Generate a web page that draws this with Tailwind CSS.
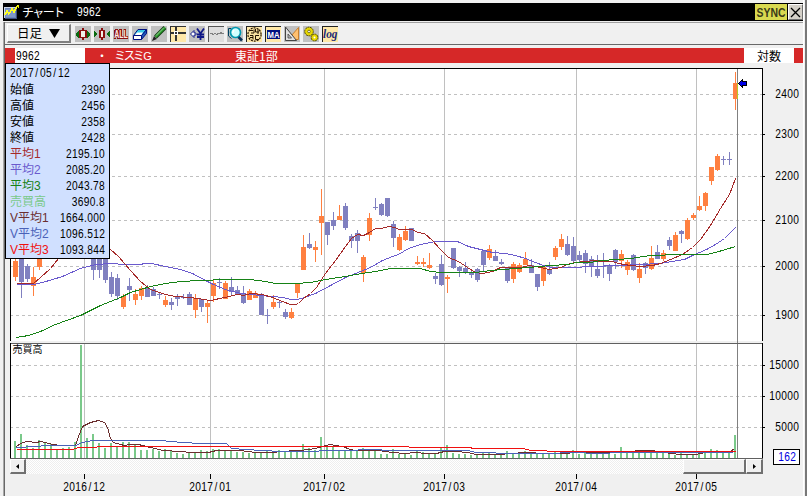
<!DOCTYPE html>
<html lang="ja">
<head>
<meta charset="utf-8">
<title>チャート 9962</title>
<script src="https://cdn.jsdelivr.net/npm/@tailwindcss/browser@4"></script>
</head>
<body class="overflow-hidden bg-[#f0f0f0]">
<div class="relative flex h-[496px] w-[807px] flex-col overflow-hidden bg-[#f0f0f0] font-['Liberation_Sans','Noto_Sans_CJK_JP',sans-serif] text-[12px] leading-none text-black">

  <!-- Title bar -->
  <header class="mt-[3px] ml-[3px] flex h-[18px] w-[801px] shrink-0 items-center bg-black text-white">
    <svg class="ml-px h-[16px] w-[16px]" viewBox="0 0 16 16" shape-rendering="crispEdges">
      <path d="M1 4h11v11H1z" fill="#7088b8"/><path d="M2 5h9v8H2z" fill="#8098c8"/><path d="M0 3h12v1H1v10H0z" fill="#d0d8e8"/><path d="M12 4h1v11H1v-1h11z" fill="#405080"/>
      <path d="M1 11l2-4 2 3 3-5 2 3 2-4 2-3" fill="none" stroke="#ffff20" stroke-width="1.4"/><path d="M12 2h3M14 1v3" stroke="#e8e800"/>
    </svg>
    <span class="ml-[2px] w-[55px] whitespace-nowrap font-['Noto_Sans_CJK_JP'] text-[12px] tracking-[-1.6px]">チャート</span>
    <span class="inline-block origin-left scale-x-85 tracking-[0.385px]">9962</span>
    <span class="ml-auto flex h-[16px] w-[32px] items-center justify-center bg-[#d9d950]">
      <svg class="h-[16px] w-[32px] overflow-visible" viewBox="0 0 32 16"><text x="1.5" y="12.8" textLength="29" lengthAdjust="spacingAndGlyphs" font-family="Liberation Sans" font-size="13.5" font-weight="bold" fill="#3a3a18">SYNC</text></svg>
    </span>
    <span class="mr-[1px] ml-px flex h-[16px] w-[15px] items-center justify-center border border-t-white border-r-[#707070] border-b-[#707070] border-l-white bg-[#d4d0c8]">
      <svg class="h-[11px] w-[11px]" viewBox="0 0 11 11"><path d="M1 1l9 9M10 1L1 10" stroke="#000" stroke-width="1.3"/></svg>
    </span>
  </header>

  <!-- Toolbar -->
  <div class="mt-px ml-[3px] flex h-[23px] w-[801px] shrink-0 items-center border-t border-b border-l border-t-[#a0a0a0] border-b-[#686868] border-l-[#a0a0a0]">
    <div class="ml-[3px] flex h-[19px] w-[64px] items-center border-t border-r-2 border-b-2 border-l border-t-white border-r-[#808080] border-b-[#808080] border-l-white pl-[9px]">
      <span class="whitespace-nowrap font-['Noto_Sans_CJK_JP'] text-[12.5px]">日足</span>
      <svg class="ml-[7px] h-[9px] w-[11px]" viewBox="0 0 11 9"><path d="M0 0h11L5.500 9z"/></svg>
    </div>
    <div class="ml-[4px] flex gap-[3px]">
      <svg class="h-4 w-4" viewBox="0 0 16 16" shape-rendering="crispEdges"><path fill="#c0c0c0" d="M0 0h16v16H0z"/><path fill="#0a6a10" d="M1 7h1V6h1V5h1v7H3v-1H2v-1H1zM15 7h-1V6h-1V5h-1v7h1v-1h1v-1h1z"/><path fill="#8b1010" d="M4 4h3V2h2v2h3v8H9v2H7v-2H4z"/><path fill="#f0f0e8" d="M6 5h4v6H6z"/></svg>
      <svg class="h-4 w-4" viewBox="0 0 16 16" shape-rendering="crispEdges"><path fill="#c0c0c0" d="M0 0h16v16H0z"/><path fill="#0a6a10" d="M0 5h1v1h1v1h1v2H2v1H1v1H0zM16 5h-1v1h-1v1h-1v2h1v1h1v1h1z"/><path fill="#8b1010" d="M5 4h2V2h2v2h2v8H9v2H7v-2H5z"/><path fill="#f0f0e8" d="M7 5h2v6H7z"/></svg>
      <svg class="h-4 w-4 overflow-visible" viewBox="0 0 16 16" shape-rendering="crispEdges"><path fill="#c0c0c0" d="M0 0h16v16H0z"/><path fill="#8b1010" d="M2 3h3v1h1v9H4v-2H3v2H1V4h1zM6 3h3v7h2v3H6zM11 3h2v7h2v3h-4z"/><text x="1.300" y="12" textLength="13.500" lengthAdjust="spacingAndGlyphs" font-family="Liberation Sans" font-weight="bold" font-size="11" fill="#ffe8e0" stroke="#8b1010" stroke-width="1.300" paint-order="stroke">ALL</text></svg>
      <svg class="h-4 w-4" viewBox="0 0 16 16"><path fill="#c0c0c0" d="M0 0h16v16H0z"/><path fill="#38c8e8" stroke="#001080" d="M6 3.500h8.500l-4.500 6H1.500z"/><path fill="#fff" d="M5 6.500h6L9.500 9H3z"/><path fill="#2058b8" stroke="#001080" d="M9.500 9.500l5-6v4l-5 6z"/><path fill="#fff" stroke="#001080" d="M1.500 9.500h8v4h-8z"/></svg>
      <svg class="h-4 w-4" viewBox="0 0 16 16"><path fill="#c0c0c0" d="M0 0h16v16H0z"/><path stroke="#104010" stroke-width="4" d="M14 1.500L4.500 11"/><path stroke="#30a030" stroke-width="2.200" d="M14 1.500L4.500 11"/><path d="M3 10l3 3-5 2z" fill="#222"/><path stroke="#b0e0b0" stroke-width=".8" d="M13 1.500L5 9.500"/></svg>
      <svg class="h-4 w-4" viewBox="0 0 16 16" shape-rendering="crispEdges"><path fill="#ffe8a8" d="M0 0h16v16H0z"/><path fill="#333" d="M0 0h16v1H0zM0 0h1v16H0zM1 6h15v2H1zM5 1h2v14H5z"/><path fill="#fff" d="M4 5h4v4H4z"/><path fill="#333" d="M5 6h2v2H5z"/></svg>
      <svg class="h-4 w-4" viewBox="0 0 16 16"><path fill="#c0c0c0" d="M0 0h16v16H0z"/><path fill="#fff" stroke="#101888" d="M1.500 8L5 4.500V7h2v2H5v2.500z"/><path fill="none" stroke="#101888" stroke-width="1.800" d="M8 2.500l3.500 5 3.500-5M11.500 7v7M8 8.500h7M8 11h7"/></svg>
      <svg class="h-4 w-4" viewBox="0 0 16 16" shape-rendering="crispEdges"><path fill="#dedede" d="M0 0h16v16H0z"/><path fill="#555" d="M0 0h16v1H0zM0 0h1v16H0z"/><path fill="none" stroke="#808080" d="M2 8l2-1 1 2 2-2 2 2 1-2 2 1 1-2 1 2 2-1"/></svg>
      <svg class="h-4 w-4" viewBox="0 0 16 16"><path fill="#c0c0c0" d="M0 0h16v16H0z"/><path fill="none" stroke="#004060" d="M4 2.500H1.500V10l3 2.500"/><circle cx="8.500" cy="6.500" r="5" fill="#d0ffff" stroke="#0098b0" stroke-width="1.700"/><path d="M7 4l-1.500 3" stroke="#fff" stroke-width="1.500"/><path stroke="#083058" stroke-width="2.600" d="M11.500 11l3.500 3.500"/></svg>
      <svg class="h-4 w-4" viewBox="0 0 16 16"><path fill="#ffe8a8" d="M0 0h16v16H0z"/><path fill="#222" d="M0 0h16v1H0zM0 0h1v16H0z"/><circle cx="8.500" cy="8.500" r="6.600" fill="#f8e0a0" stroke="#201000" stroke-width="1.200" stroke-dasharray="2 1"/><path d="M4 4.500h3M5 7h3V3.500M9.500 3v3H13M12 3v5M4 9.500h3v4M4 11.500h3M13 9.500h-3.500v4H13" fill="none" stroke="#201000"/></svg>
      <svg class="h-4 w-4 overflow-visible" viewBox="0 0 16 16"><path fill="#ffe8a8" d="M0 0h16v16H0z"/><path fill="#222" d="M0 0h16v1H0zM0 0h1v16H0z"/><path fill="#001080" d="M2 4h13v9H2z"/><text x="2.600" y="11.800" textLength="12" lengthAdjust="spacingAndGlyphs" font-family="Liberation Sans" font-weight="bold" font-size="9" fill="#fff">MA</text></svg>
      <svg class="h-4 w-4" viewBox="0 0 16 16"><path fill="#c0c0c0" d="M0 0h16v16H0z"/><path fill="#ffc070" stroke="#c88030" d="M14.500 1.500v12H4z"/><path fill="#e0e0e0" stroke="#444" d="M1.500 1v13.500h11z"/><path d="M4 8v4h3.500z" fill="#c0c0c0" stroke="#444" stroke-width=".8"/></svg>
      <svg class="h-4 w-4" viewBox="0 0 16 16"><path fill="#c0c0c0" d="M0 0h16v16H0z"/><circle cx="6" cy="5.500" r="4.300" fill="#e8d800" stroke="#504800" stroke-dasharray="2 .6"/><circle cx="6" cy="5.500" r="1.300" fill="#fff" stroke="#504800" stroke-width=".7"/><circle cx="11.500" cy="11.500" r="3.400" fill="#e8d800" stroke="#504800" stroke-dasharray="2 .6"/><circle cx="11.500" cy="11.500" r="1" fill="#fff"/></svg>
      <svg class="h-4 w-4 overflow-visible" viewBox="0 0 16 16"><path fill="#ffe8a8" d="M0 0h16v16H0z"/><path fill="#222" d="M0 0h16v1H0zM0 0h1v16H0z"/><text x="1" y="11.500" textLength="14.500" lengthAdjust="spacingAndGlyphs" font-family="Liberation Serif" font-style="italic" font-weight="bold" font-size="12.500" fill="#202878">log</text></svg>
    </div>
  </div>

  <!-- Instrument bar -->
  <div class="mt-[3px] ml-[5px] flex h-[15px] w-[798px] shrink-0 items-center bg-[#d62828] font-['Noto_Sans_CJK_JP'] text-white">
    <span class="ml-[10px] flex h-full w-[70px] items-center bg-white pl-px font-['Liberation_Sans'] text-black"><span class="inline-block origin-left scale-x-85 tracking-[0.385px]">9962</span></span>
    <span class="ml-[11px] w-[18px]">・</span>
    <span class="w-[121px] whitespace-nowrap tracking-[-2.6px]">ミスミ<span class="ml-px font-['Liberation_Sans'] text-[11px] tracking-normal">G</span></span>
    <span class="whitespace-nowrap">東証1部</span>
    <span class="mr-[9px] ml-auto flex h-full w-[50px] items-center justify-center bg-white text-black">対数</span>
  </div>

  <!-- Price and volume panes -->
  <svg id="plot" class="block h-[396px] w-[807px] shrink-0" viewBox="0 63 807 396" shape-rendering="crispEdges"></svg>

  <!-- Scrollbar -->
  <div class="ml-[10px] flex h-[15px] w-[753px] shrink-0 bg-[#f7f7f7] bg-[repeating-conic-gradient(#eeeeee_0_25%,#ffffff_0_50%)] bg-[length:2px_2px]">
    <span class="flex w-[16px] items-center justify-center border-t border-r-2 border-b-2 border-l border-t-white border-r-[#707070] border-b-[#707070] border-l-white bg-[#f0f0f0]"><svg class="h-[5px] w-[3px]" viewBox="0 0 3 5"><path d="M3 0v5L0 2.500z"/></svg></span>
    <span class="ml-auto w-[63px] border-t border-r-2 border-b-2 border-l border-t-white border-r-[#707070] border-b-[#707070] border-l-white bg-[#f0f0f0]"></span>
    <span class="flex w-[17px] items-center justify-center border-t border-r-2 border-b-2 border-l border-t-white border-r-[#707070] border-b-[#707070] border-l-white bg-[#f0f0f0]"><svg class="h-[5px] w-[3px]" viewBox="0 0 3 5"><path d="M0 0v5l3-2.500z"/></svg></span>
  </div>

  <!-- Date axis -->
  <svg id="dates" class="block h-[22px] w-[807px] shrink-0" viewBox="0 474 807 22"></svg>

  <!-- Window frame edges -->
  <div class="absolute top-[22px] bottom-0 left-[3px] w-[2px] border-r border-l border-r-[#686868] border-l-[#a8a8a8]"></div>
  <div class="absolute top-0 right-0 bottom-0 w-[4px] border-r-2 border-l border-r-[#787878] border-l-white"></div>

  <!-- Bar count -->
  <div class="absolute top-[449px] left-[773px] flex h-[16px] w-[27px] items-center justify-end border border-black bg-white pr-[3px] text-[#0000e0]"><span class="inline-block origin-right scale-x-85 tracking-[0.385px]">162</span></div>

  <!-- Data window -->
  <div class="absolute top-[63px] left-[5px] flex h-[196px] w-[105px] flex-col border border-black bg-[#d0e0ff] pr-[4px] pl-[4px] font-['Liberation_Sans','Noto_Sans_CJK_JP',sans-serif]">
    <div class="flex h-[18px] origin-left scale-x-85 items-center tracking-[0.385px]">2017<i class="w-[7.06px] shrink-0 pl-[1.5px] not-italic">/</i>05<i class="w-[7.06px] shrink-0 pl-[1.5px] not-italic">/</i>12</div>
    <div class="flex h-4 items-center justify-between"><span>始値</span><span class="origin-right scale-x-85 tracking-[0.385px]">2390</span></div>
    <div class="flex h-4 items-center justify-between"><span>高値</span><span class="origin-right scale-x-85 tracking-[0.385px]">2456</span></div>
    <div class="flex h-4 items-center justify-between"><span>安値</span><span class="origin-right scale-x-85 tracking-[0.385px]">2358</span></div>
    <div class="flex h-4 items-center justify-between"><span>終値</span><span class="origin-right scale-x-85 tracking-[0.385px]">2428</span></div>
    <div class="flex h-4 items-center justify-between"><span class="shrink-0 text-[#a52a2a]">平均1</span><span class="origin-right scale-x-85 tracking-[0.385px]">2195.10</span></div>
    <div class="flex h-4 items-center justify-between"><span class="shrink-0 text-[#6a5acd]">平均2</span><span class="origin-right scale-x-85 tracking-[0.385px]">2085.20</span></div>
    <div class="flex h-4 items-center justify-between"><span class="shrink-0 text-[#168216]">平均3</span><span class="origin-right scale-x-85 tracking-[0.385px]">2043.78</span></div>
    <div class="flex h-4 items-center justify-between"><span class="shrink-0 text-[#7ac98a]">売買高</span><span class="origin-right scale-x-85 tracking-[0.385px]">3690.8</span></div>
    <div class="flex h-4 items-center justify-between"><span class="w-0 whitespace-nowrap text-[#6b2e2e]">V平均1</span><span class="origin-right scale-x-85 tracking-[0.385px]">1664.000</span></div>
    <div class="flex h-4 items-center justify-between"><span class="w-0 whitespace-nowrap text-[#4a62b8]">V平均2</span><span class="origin-right scale-x-85 tracking-[0.385px]">1096.512</span></div>
    <div class="flex h-4 items-center justify-between"><span class="w-0 whitespace-nowrap text-[#f01010]">V平均3</span><span class="origin-right scale-x-85 tracking-[0.385px]">1093.844</span></div>
  </div>
</div>

<script>
// Candles: x, high, body top, body bottom, low, colour (u = up, d = down)
const candles = `15 255 261 277 281 u|21 250 255 282 298 d|27 264 266 279 282 d|33 267 277 286 296 u|39 250 255 267 270 u
93 250 250 270 280 d|99 250 250 270 278 d|105 250 250 280 283 d|111 272 277 294 297 d|117 274 278 296 300 d|123 294 296 307 309 u|129 278 286 290 301 d|135 289 294 300 305 u|141 286 288 296 300 u|147 285 288 297 297 d|153 287 289 296 296 d|159 292 294 295 299 d|165 296 300 305 307 u|171 298 302 305 310 d|177 294 296 299 306 d|183 294 297 298 299 d|189 292 294 305 305 d|195 294 298 310 318 u|201 299 299 307 312 d|207 301 303 307 323 u
213 280 283 296 302 u|219 278 282 283 289 d|225 281 283 299 299 u|231 277 287 292 295 d|237 286 290 294 294 d|243 286 293 303 304 d|249 289 291 300 300 u|255 291 293 298 298 u|261 293 294 315 315 d|267 309 315 316 324 d|273 295 302 307 309 u|279 300 302 303 308 d|285 309 312 317 319 d|291 308 312 318 319 u|297 284 284 293 298 u|303 235 247 270 270 u|309 233 244 248 249 d|315 241 247 250 262 u|321 189 216 223 255 u|327 222 222 235 245 d|333 212 220 226 230 d|339 205 216 220 220 u|345 203 206 228 230 d|351 234 236 241 248 d|357 230 233 241 253 d|363 255 257 273 282 u|369 213 218 235 241 u|375 198 207 208 210 d|381 203 204 215 216 d|387 198 198 216 217 d|393 221 224 238 247 d
399 234 237 250 251 u|405 226 231 240 241 u|411 228 228 241 241 d|417 256 262 264 265 u|423 258 262 264 267 u|429 253 265 268 269 u|435 273 276 279 284 d|441 255 264 285 286 d|447 275 277 279 293 u|453 248 248 268 269 d|459 266 267 271 277 d|465 262 268 273 274 d|471 270 272 275 278 d|477 268 269 280 282 d|483 251 251 265 271 d|489 245 249 258 260 u|495 250 256 261 261 d|501 259 262 264 265 d|507 268 268 281 283 d|513 262 264 279 283 u|519 263 265 272 273 u|525 252 259 265 265 u|531 259 265 273 273 d|537 274 274 287 291 d|543 267 267 281 286 u|549 262 270 274 275 d|555 246 248 257 260 u|561 234 239 247 250 u|567 236 244 255 256 d|573 237 246 261 263 d|579 251 255 260 263 d|585 250 253 264 273 d
591 256 259 266 277 d|597 255 269 276 278 d|603 253 266 267 278 d|609 264 265 274 281 d|615 249 250 262 269 d|621 250 254 261 268 u|627 260 262 270 275 u|633 254 255 270 271 d|639 263 269 278 283 u|645 262 263 268 274 d|651 246 258 269 270 u|657 245 252 259 259 d|663 250 253 259 261 u|669 237 240 246 250 d|675 232 235 251 251 u|681 230 231 234 243 d|687 218 220 239 240 u|693 213 215 218 220 u|699 196 206 210 211 u|705 192 193 206 211 u|711 167 167 181 185 u|717 154 156 170 171 u|723 156 159 160 165 d|729 152 159 160 165 d|735 72 83 99 110 u`;

// Top edge of every volume bar, one bar each 6 px from x = 14
const volume = [441,434,445,448,440,442,444,449,448,447,442,345,438,434,443,448,443,447,442,442,444,450,450,449,451,449,451,453,454,452,452,
450,451,449,449,450,450,452,452,453,452,452,451,453,450,452,451,452,444,448,450,437,445,447,450,451,450,450,448,450,450,454,454,449,454,454,455,451,452,454,454,447,445,453,454,454,455,455,453,453,455,455,451,453,454,451,453,453,453,454,451,452,454,450,454,452,453,453,452,454,454,447,452,453,450,452,453,452,452,454,455,453,454,454,454,452,449,450,452,451,435];

const lines = [
 ['#6a5acd','16,284 33,284 42,282 62,276 80,268 95,264 110,263 125,264 140,264 144,263 151,263 165,266 180,269 192,273 205,280 213,284 225,289 240,293 260,295 283,297 290,299 297,299 304,297 315,293 330,285 345,277 360,271 370,267 382,260 392,256 398,254 408,248 420,244 435,241 445,241 457,241 468,246 480,249 492,252 505,253 515,255 525,258 535,262 543,265 552,267 575,267 588,266 620,265 640,264 660,263 672,261 684,259 692,255 706,249 715,244 724,238 735,227'],
 ['#a52a2a','16,283 33,283 40,277 50,268 58,258 80,240 100,240 110,249 118,256 130,270 140,281 150,289 165,294 175,296 190,297 210,300 224,297 237,294 243,295 250,293 262,294 272,297 282,301 290,304 295,304 298,303 303,298 310,293 316,287 325,273 335,260 345,246 351,238 357,234 363,235 369,232 375,228 381,228 388,226 394,227 399,229 412,229 417,232 424,233 432,240 440,249 448,257 458,261 467,267 475,272 482,273 492,271 500,267 520,267 529,265 540,267 549,269 560,267 567,264 575,262 594,260 600,261 612,261 618,263 630,265 640,266 652,265 660,263 670,259 682,254 692,247 700,239 710,225 720,208 729,194 735,178'],
 ['#168216','16,337 28,335 40,331 55,324 80,315 100,305 120,297 130,292 140,289 150,286 165,283 180,281 200,280 225,279 250,279 265,281 275,283 295,283 310,282 325,279 345,276 355,274 375,271 390,268 420,268 430,271 440,272 475,272 490,270 515,268 540,266 550,265 568,264 575,262 590,262 600,260 618,259 630,258 650,255 680,254 706,254 715,252 725,249 735,246'],
 ['#6b2e2e','16,446 20,443 26,441 36,442 40,441 45,442 52,444 60,445 75,445 78,436 82,426 90,422 98,420 104,422 107,427 110,438 113,442 120,444 124,445 130,444 138,444 150,447 163,450 180,451 190,452 208,452 216,450 240,450 255,452 275,452 277,451 300,450 315,448 325,445 330,444 335,445 342,446 350,449 355,450 378,450 392,452 404,453 416,452 424,453 436,453 444,451 455,451 468,452 475,454 503,454 506,453 530,452 540,453 600,452 620,452 640,450 648,450 660,451 670,453 680,454 695,454 705,452 730,451 734,448'],
 ['#4a62b8','16,447 36,446 46,445 75,445 82,442 92,440 160,440 182,442 200,443 226,443 231,448 245,449 262,450 280,451 317,451 320,450 350,450 365,449 380,449 382,450 468,450 475,452 515,453 550,453 570,452 600,453 620,452 732,452'],
 ['#f01010','16,449 72,449 78,447 95,447 98,446 408,446 409,447 470,447 472,448 523,448 530,450 545,450 548,451 735,451']
];

const months = [[84,'2016/12'],[210,'2017/01'],[324,'2017/02'],[444,'2017/03'],[576,'2017/04'],[696,'2017/05']];
const prices = [[94,'2400'],[134,'2300'],[176,'2200'],[220,'2100'],[266,'2000'],[315,'1900']];
const volumes = [[365,'15000'],[396,'10000'],[427,'5000']];

const rect = (x, y, w, h, fill) => `<rect x="${x}" y="${y}" width="${w}" height="${h}" fill="${fill}"/>`;
// Condensed digits and slashes on a fixed 6 px pitch
const label = (x, y, s) => `<text transform="translate(${x} ${y}) scale(.85 1)" x="${[...s].map((c, i) => ((6 * i + (c === '/' ? 1.5 : 0.2)) / .85).toFixed(2)).join(' ')}" y="0" font-family="Liberation Sans" font-size="12">${s}</text>`;

let out = rect(10, 68, 753, 273, '#fff') + rect(10, 343, 753, 116, '#fff');
for (const [y, s] of [...prices, ...volumes]) {
  out += `<path d="M10 ${y + .5}H762" stroke="#c0c0c0" stroke-dasharray="3 3"/>` + rect(763, y, 2, 1, '#000') + label(799 - 6 * s.length, y + 4, s);
}
for (const [x] of months) out += rect(x, 69, 1, 272, '#c0c0c0') + rect(x, 344, 1, 114, '#c0c0c0');
volume.forEach((y, i) => { out += rect(14 + 6 * i, y, 2, 458 - y, '#7ac98a'); });
for (const c of candles.split(/[|\n]/)) {
  const [x, hi, top, bottom, lo, dir] = c.split(' ');
  const fill = dir === 'u' ? '#ff8040' : '#8080c0';
  out += rect(x, hi, 1, lo - hi, fill) + rect(x - 2, top, 5, bottom - top, fill);
}
for (const [stroke, pts] of lines) out += `<polyline points="${pts}" transform="translate(.5 .5)" fill="none" stroke="${stroke}"/>`;
out += rect(737, 69, 1, 389, '#808080') + rect(737, 83, 1, 16, '#b8c828');
out += rect(10, 68, 753, 1, '#000') + rect(10, 68, 1, 273, '#000') + rect(762, 68, 1, 273, '#000');
out += rect(10, 343, 753, 1, '#606060') + rect(10, 343, 1, 116, '#000') + rect(762, 343, 1, 116, '#000') + rect(10, 458, 753, 1, '#606060');
out += '<path d="M738.500 83.500l4-4v2h4v4h-4v2z" fill="#0000e8" stroke="#000"/>';
out += '<text x="12.500" y="353" font-family="Noto Sans CJK JP" font-size="10">売買高</text>';
document.getElementById('plot').innerHTML = out;

document.getElementById('dates').innerHTML = months.map(([x, s]) => rect(x, 474, 1, 5, '#000') + label(x - 21, 491, s)).join('');
</script>
</body>
</html>
